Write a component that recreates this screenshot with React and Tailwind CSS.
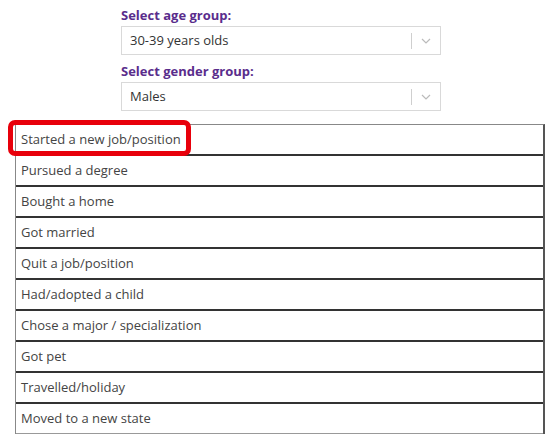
import React from 'react'

const items = [
  'Started a new job/position',
  'Pursued a degree',
  'Bought a home',
  'Got married',
  'Quit a job/position',
  'Had/adopted a child',
  'Chose a major / specialization',
  'Got pet',
  'Travelled/holiday',
  'Moved to a new state',
]

const Select = ({ value }) => (
  <div className="flex h-[29px] items-center border border-[#d9d9d9] bg-white">
    <span className="flex-1 pl-[8px] text-[13px] text-[#333]">{value}</span>
    <span className="h-[16px] w-px bg-[#cfcfcf]" />
    <span className="flex w-[28px] justify-center">
      <svg width="10" height="6" viewBox="0 0 10 6" fill="none" stroke="#bbb" strokeWidth="1.2">
        <path d="M1 1l4 4 4-4" />
      </svg>
    </span>
  </div>
)

export default function App() {
  return (
    <div className="relative h-[444px] w-[560px] bg-white" style={{ fontFamily: '"Open Sans", sans-serif' }}>
      <div className="ml-[121px] w-[320px] pt-[7px]">
        <div className="mb-[3px] text-[13px] font-bold leading-[16px] text-[#5a2d8c]">Select age group:</div>
        <Select value="30-39 years olds" />
        <div className="mb-[3px] mt-[8px] text-[13px] font-bold leading-[16px] text-[#5a2d8c]">Select gender group:</div>
        <Select value="Males" />
      </div>

      <div className="mx-[15px] mt-[13px] border-l border-r-2 border-t border-[#888] border-r-[#555]">
        {items.map((item) => (
          <div
            key={item}
            className="flex h-[31px] items-center border-b-2 border-[#333] pl-[5px] text-[13px] text-[#444] last:h-[30px] last:border-b last:border-[#999]"
          >
            {item}
          </div>
        ))}
      </div>

      {/* highlight annotation */}
      <div className="absolute left-[8px] top-[120px] h-[36px] w-[183px] rounded-[7px] border-[5px] border-[#e8000b]" />
    </div>
  )
}
